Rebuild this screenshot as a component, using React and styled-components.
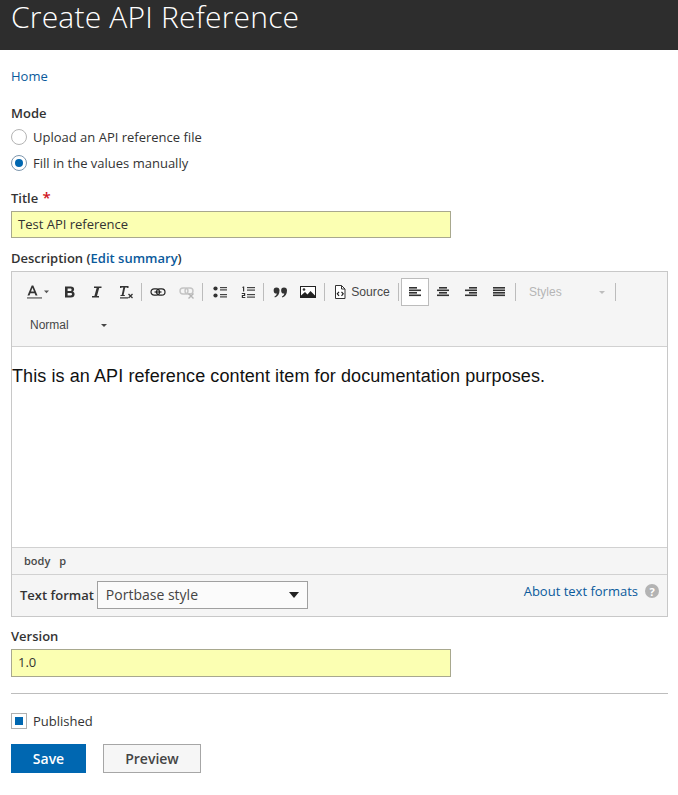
import React from "react";
import styled, { createGlobalStyle } from "styled-components";

const Global = createGlobalStyle`
  html, body { margin: 0; padding: 0; background: #fff; }
  body { font-family: "Open Sans", sans-serif; font-size: 13px; color: #333; }
  * { box-sizing: border-box; }
`;
const Page = styled.div`width: 678px; height: 795px; overflow: hidden;`;
const Header = styled.header`
  height: 50px; background: #2d2d2d; padding-left: 11px;
`;
const H1 = styled.h1`
  margin: 0; font: 300 30px/34px "Open Sans", sans-serif; letter-spacing: .2px; color: #fff;
`;
const Main = styled.main`padding: 0 10px 0 11px; display: flex; flex-direction: column;`;
const Crumb = styled.a`margin-top: 17px; line-height: 18px; color: #0a5a9c; font-size: 13px;`;
const Label = styled.div`
  font-weight: 600; font-size: 13px; line-height: 18px; color: #333; margin-top: ${p => p.$mt}px;
`;
const Req = styled.span`color: #d0121b; font-size: 15px; line-height: 10px; margin-left: 1px;`;
const Radios = styled.div`display: flex; flex-direction: column; gap: 8px; margin-top: 6px;`;
const Row = styled.label`display: flex; align-items: center; gap: 6px; height: 18px; font-size: 13px; color: #333;`;
const Radio = styled.span`
  width: 16px; height: 16px; border-radius: 50%; background: #fff;
  border: 1px solid ${p => (p.$on ? "#7d96ad" : "#b4b4b4")};
  display: flex; align-items: center; justify-content: center;
  &::after { content: ""; width: 8px; height: 8px; border-radius: 50%; background: ${p => (p.$on ? "#0067b1" : "transparent")}; }
`;
const Input = styled.div`
  width: 440px; height: ${p => p.$h}px; margin-top: 4px; padding: 0 6px 2px; display: flex; align-items: center;
  background: #fbffb2; border: 1px solid #a8a88e; font-size: 13px; color: #333;
`;
const Link = styled.a`color: #0a5a9c; font-weight: 600;`;
const Editor = styled.div`
  margin-top: 4px; border: 1px solid #c8c8c8; height: 346px; display: flex; flex-direction: column; background: #f5f5f5;
`;
const Toolbar = styled.div`
  height: 75px; border-bottom: 1px solid #d1d1d1; padding: 6px 0 0 6px; display: flex; flex-direction: column;
`;
const ToolRow = styled.div`display: flex; align-items: center; height: 28px; margin-top: ${p => p.$mt || 0}px;`;
const Tool = styled.span`
  width: ${p => p.$w || 28}px; height: 28px; display: flex; align-items: center; justify-content: center;
  border: 1px solid ${p => (p.$active ? "#bcbcbc" : "transparent")}; background: ${p => (p.$active ? "#fff" : "transparent")};
  flex: none; color: #474747; font-family: "Liberation Sans", sans-serif; font-size: 12.2px; gap: 4px;
`;
const Sep = styled.span`
  width: 1px; height: 18px; background: #bcbcbc; flex: none;
  margin-left: ${p => p.$l || 0}px; margin-right: ${p => p.$r || 0}px;
`;
const Combo = styled.span`
  width: ${p => p.$w}px; height: 28px; display: flex; align-items: center; justify-content: space-between; flex: none;
  padding: 0 ${p => p.$pr}px 0 ${p => p.$pl}px; font: 12px "Liberation Sans", sans-serif;
  color: ${p => (p.$off ? "#b5b5b5" : "#474747")};
`;
const Caret = styled.i`
  width: 0; height: 0; border: 3px solid transparent; border-top-color: ${p => p.$c || "#474747"}; border-bottom: 0; display: block;
`;
const Content = styled.div`
  height: 200px; background: #fff; padding: 19px 0 0 0;
  font: 18px/21px "Liberation Sans", sans-serif; letter-spacing: .09px; color: #111;
`;
const Path = styled.div`
  height: 28px; border-top: 1px solid #d1d1d1; border-bottom: 1px solid #d1d1d1; padding: 0 0 2px 12px; display: flex; align-items: center; gap: 9px;
  font-size: 11px; font-weight: 600; color: #484848;
`;
const Format = styled.div`
  flex: 1; display: flex; align-items: center; justify-content: space-between; padding: 0 8px 2px 8px;
`;
const FormatLeft = styled.div`display: flex; align-items: center; gap: 3px; font-weight: 600; font-size: 13px;`;
const Select = styled.div`
  width: 211px; height: 28px; background: #fbfbfb; border: 1px solid #a0a0a0; display: flex; align-items: center; justify-content: space-between;
  padding: 0 8px; font-size: 14px; font-weight: 400; color: #444;
`;
const SelectCaret = styled.i`width: 0; height: 0; border: 5px solid transparent; border-top: 6px solid #222; border-bottom: 0; display: block;`;
const About = styled.div`display: flex; align-items: center; gap: 7px; color: #0a5a9c; font-size: 13px; margin-top: -7px;`;
const Help = styled.span`
  width: 14px; height: 14px; border-radius: 50%; background: #b3b3b3; color: #fff; font-size: 11px; font-weight: 700;
  display: flex; align-items: center; justify-content: center;
`;
const Rule = styled.hr`margin: 16px 0 0; height: 1px; border: 0; background: #bdbdbd;`;
const Check = styled.span`
  width: 16px; height: 16px; background: #fff; border: 1px solid #b0b0b0; display: flex; align-items: center; justify-content: center;
  &::after { content: ""; width: 8px; height: 8px; background: #0067b1; }
`;
const PublishedRow = styled(Row)`margin-top: 18px;`;
const Actions = styled.div`display: flex; gap: 17px; margin-top: 14px;`;
const Button = styled.button`
  height: 29px; width: ${p => p.$w}px; padding: 0; font: 600 14px "Open Sans", sans-serif;
  background: ${p => (p.$primary ? "#0067b1" : "#f6f6f6")}; color: ${p => (p.$primary ? "#fff" : "#444")};
  border: 1px solid ${p => (p.$primary ? "#0067b1" : "#a6a6a6")};
`;

const I = ({ w = 16, h = 16, children, ...r }) => (
  <svg width={w} height={h} viewBox={`0 0 ${w} ${h}`} style={{ display: "block" }} {...r}>{children}</svg>
);
const ALines = ({ rows }) => (
  <I>
    {rows.map(([x, y, w], i) => <rect key={i} x={x} y={y} width={w} height="1.6" fill="#333" />)}
  </I>
);
const L = [[2,3,8],[2,5.5,12],[2,8,8],[2,10.5,12]];
const C = [[4,3,8],[2,5.5,12],[4,8,8],[2,10.5,12]];
const R = [[6,3,8],[2,5.5,12],[6,8,8],[2,10.5,12]];
const J = [[2,3,12],[2,5.5,12],[2,8,12],[2,10.5,12]];

export default function App() {
  return (
    <Page>
      <Global />
      <Header><H1>Create API Reference</H1></Header>
      <Main>
        <Crumb>Home</Crumb>
        <Label $mt={19}>Mode</Label>
        <Radios>
          <Row><Radio />Upload an API reference file</Row>
          <Row><Radio $on />Fill in the values manually</Row>
        </Radios>
        <Label $mt={17}>Title <Req>*</Req></Label>
        <Input $h={27}>Test API reference</Input>
        <Label $mt={11}>Description (<Link>Edit summary</Link>)</Label>
        <Editor>
          <Toolbar>
            <ToolRow>
              <Tool $w={38}>
                <I w={28} h={18}>
                  <path d="M4.500 12.500L8.700 2.500h1.600L14.500 12.500h-2l-.9-2.300H7.400l-.9 2.300zM8 8.600h3L9.500 4.700z" fill="#333"/>
                  <rect x="4" y="14" width="15" height="1.800" fill="#8a8a8a"/>
                  <path d="M21 7.500h5l-2.500 2.700z" fill="#555"/>
                </I>
              </Tool>
              <Tool $w={28}><I><path d="M3 2.500h5.700c2.200 0 3.400 1 3.400 2.800 0 1.100-.6 1.900-1.500 2.300 1.200.3 2 1.300 2 2.600 0 2-1.400 3.300-3.700 3.300H3zM5.600 4.600v2.400h2.700c.8 0 1.300-.4 1.300-1.200s-.5-1.200-1.300-1.200zM5.600 9v2.400h3c.9 0 1.400-.4 1.400-1.200S9.500 9 8.600 9z" fill="#333" fillRule="evenodd"/></I></Tool>
              <Tool $w={26}><I><path d="M5 2.500h7.500v1.600h-2.300L8 12h2v1.500H3V12h2.400L7.600 4.100H5z" fill="#333"/></I></Tool>
              <Tool $w={31}>
                <I w={18} h={18}>
                  <path d="M3 3h8.500v2h-1.200l-.3-.6H8.200L6.600 12h1.200v1H3.500v-1h1.200L6.300 4.400H4.600l-.4.6H3z" fill="#333"/>
                  <rect x="3" y="14.300" width="8" height="1.200" fill="#333"/>
                  <path d="M11.500 11l4 4M15.500 11l-4 4" stroke="#333" strokeWidth="1.300"/>
                </I>
              </Tool>
              <Sep />
              <Tool $w={31}>
                <I>
                  <rect x="1" y="4.800" width="8.500" height="6.400" rx="3.200" fill="none" stroke="#222" strokeWidth="1.200"/>
                  <rect x="6.500" y="4.800" width="8.500" height="6.400" rx="3.200" fill="none" stroke="#222" strokeWidth="1.200"/>
                  <rect x="4.500" y="7.400" width="7" height="1.200" fill="#222"/>
                </I>
              </Tool>
              <Tool $w={28}>
                <I>
                  <rect x="1" y="4" width="8" height="6" rx="3" fill="none" stroke="#c4c4c4" strokeWidth="1.400"/>
                  <rect x="6" y="4" width="8" height="6" rx="3" fill="none" stroke="#c4c4c4" strokeWidth="1.400"/>
                  <path d="M9.500 9.500l5 5M14.500 9.500l-5 5" stroke="#b5b5b5" strokeWidth="1.400"/>
                </I>
              </Tool>
              <Sep $l={1} />
              <Tool $w={33}>
                <I>
                  <circle cx="3.500" cy="4.500" r="2.100" fill="#333"/><circle cx="3.500" cy="11.500" r="2.100" fill="#333"/>
                  <rect x="8" y="3" width="7" height="1.200" fill="#444"/><rect x="8" y="5.300" width="7" height="1.200" fill="#444"/>
                  <rect x="8" y="10" width="7" height="1.200" fill="#444"/><rect x="8" y="12.300" width="7" height="1.200" fill="#444"/>
                </I>
              </Tool>
              <Tool $w={23}>
                <I>
                  <path d="M3 2.500h1.200v5H3V3.700H2zM1.800 9h3.400v3H3v1h2.300v1H1.800v-3h2.200v-1H1.800z" fill="#333"/>
                  <rect x="7" y="3" width="8" height="1.200" fill="#444"/><rect x="7" y="5.500" width="8" height="1.200" fill="#444"/>
                  <rect x="7" y="10" width="8" height="1.200" fill="#444"/><rect x="7" y="12.500" width="8" height="1.200" fill="#444"/>
                </I>
              </Tool>
              <Sep $l={4} />
              <Tool $w={32}>
                <I>
                  <path d="M4.500 3.500a3 3 0 0 1 3 3c0 3.500-1.700 6-4.600 7l-.5-1c1.400-.6 2.200-1.600 2.400-3A3 3 0 0 1 4.500 3.500zM12 3.500a3 3 0 0 1 3 3c0 3.500-1.700 6-4.600 7l-.5-1c1.400-.6 2.200-1.600 2.400-3a3 3 0 0 1-.3-6z" fill="#333"/>
                </I>
              </Tool>
              <Tool $w={24}>
                <I>
                  <rect x=".5" y="2.500" width="15" height="11" fill="#fff" stroke="#222"/>
                  <path d="M1 13v-1.500l4-3.500 2.500 2.500 3-3.500 4.500 4.500V13z" fill="#222"/>
                  <circle cx="4" cy="5.500" r="1.300" fill="#333"/>
                </I>
              </Tool>
              <Sep $l={4} />
              <Tool $w={73}>
                <I w={14} h={16}>
                  <path d="M2.500 1.500h6l3.500 3.500v9.500h-9.500z" fill="#fff" stroke="#333"/>
                  <path d="M8.500 1.500V5H12" fill="none" stroke="#333"/>
                  <path d="M6 7.800L4.300 9.800 6 11.800M8.500 7.800l1.700 2-1.700 2" fill="none" stroke="#222" strokeWidth="1.200"/>
                </I>
                Source
              </Tool>
              <Sep $r={2} />
              <Tool $active $w={28}><ALines rows={L} /></Tool>
              <Tool $w={28}><ALines rows={C} /></Tool>
              <Tool $w={28}><ALines rows={R} /></Tool>
              <Tool $w={28}><ALines rows={J} /></Tool>
              <Sep $l={2} />
              <Combo $off $w={99} $pl={13} $pr={10}>Styles<Caret $c="#bdbdbd" /></Combo>
              <Sep />
            </ToolRow>
            <ToolRow $mt={5}>
              <Combo $w={96} $pl={12} $pr={7}>Normal<Caret /></Combo>
            </ToolRow>
          </Toolbar>
          <Content>This is an API reference content item for documentation purposes.</Content>
          <Path><span>body</span><span>p</span></Path>
          <Format>
            <FormatLeft>Text format
              <Select>Portbase style<SelectCaret /></Select>
            </FormatLeft>
            <About>About text formats <Help>?</Help></About>
          </Format>
        </Editor>
        <Label $mt={10}>Version</Label>
        <Input $h={28}>1.0</Input>
        <Rule />
        <PublishedRow><Check />Published</PublishedRow>
        <Actions>
          <Button $primary $w={75}>Save</Button>
          <Button $w={98}>Preview</Button>
        </Actions>
      </Main>
    </Page>
  );
}
